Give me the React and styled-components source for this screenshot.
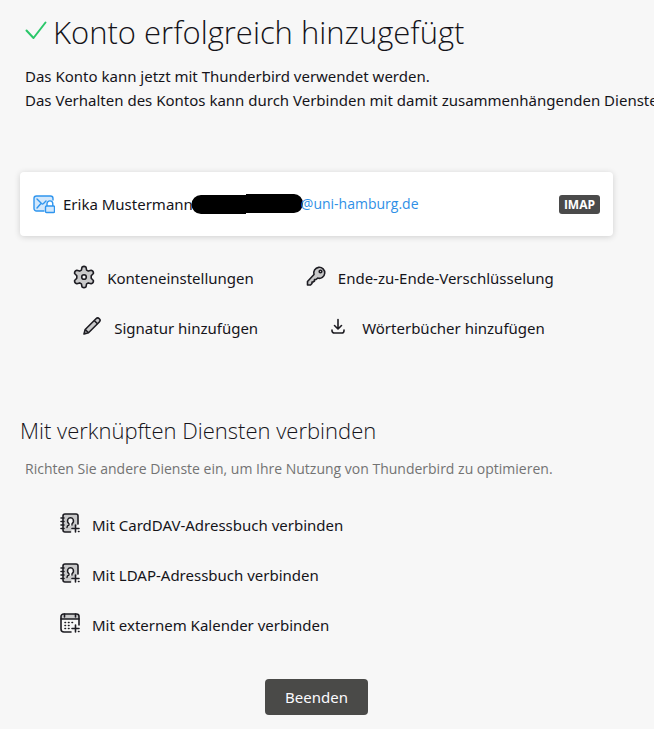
import React from "react";
import styled, { createGlobalStyle } from "styled-components";

const GlobalStyle = createGlobalStyle`
  * {
    box-sizing: border-box;
  }

  body {
    margin: 0;
    background: #f7f7f7;
    color: #15141a;
    font-family: "Noto Sans", "Open Sans", sans-serif;
    font-size: 15px;
    line-height: 24px;
  }
`;

const CheckIcon = () => (
  <svg width={22} height={24} viewBox="0 0 22 24" fill="none">
    <path
      d="M1.500 10.500L8.500 18L20.500 2.500"
      stroke="#2ac769"
      strokeWidth={2}
      strokeLinecap="round"
      strokeLinejoin="round"
    />
  </svg>
);

const MailLockIcon = () => (
  <svg
    width={22}
    height={20}
    viewBox="0 0 22 20"
    fill="#d3e8fc"
    stroke="#2f95ee"
    strokeWidth={1.4}
    strokeLinecap="round"
    strokeLinejoin="round"
  >
    <path d="M11 17H3.500a2.500 2.500 0 0 1-2.500-2.500v-10A2.500 2.500 0 0 1 3.500 2h14A2.500 2.500 0 0 1 20 4.500V6" />
    <path d="M4 5l4.500 4.500a1.500 1.500 0 0 0 2 0L13 7M4 14l3.500-4" fill="none" />
    <path d="M14 12.500V9.800a2.900 2.900 0 0 1 5.800 0v2.700" fill="#fff" />
    <rect x={12.5} y={12} width={9} height={6.5} rx={1} />
  </svg>
);

const GearIcon = () => (
  <svg
    width={22}
    height={26}
    viewBox="0 0 22 26"
    fill="#c9c9ca"
    stroke="#1d1c22"
    strokeWidth={1.6}
    strokeLinejoin="round"
  >
    <path d="M9 2.200q2-1.600 4 0l.6 2.900 1.700 1 2.900-.9q2.500.6 2.200 3.300l-2.200 2.200v2.600l2.200 2.200q.3 2.700-2.200 3.300l-2.900-.9-1.700 1-.6 2.900q-2 1.600-4 0l-.6-2.900-1.700-1-2.900.9q-2.500-.6-2.200-3.300l2.200-2.200v-2.600l-2.200-2.200q-.3-2.700 2.200-3.300l2.900.9 1.700-1z" />
    <circle cx={11} cy={12} r={2.3} fill="#f7f7f7" />
  </svg>
);

const KeyIcon = () => (
  <svg
    width={20}
    height={24}
    viewBox="0 0 20 24"
    fill="#c9c9ca"
    stroke="#1d1c22"
    strokeWidth={1.6}
    strokeLinejoin="round"
  >
    <path d="M8 8.500a5.500 5.500 0 1 1 3.700 3.600L10 13.500H8.500V15L7 16H6v1.500L4.500 19H1.500v-3.500z" />
    <circle cx={14.5} cy={5.5} r={1.3} fill="#f7f7f7" />
  </svg>
);

const PencilIcon = () => (
  <svg
    width={20}
    height={24}
    viewBox="0 0 20 24"
    fill="#c9c9ca"
    stroke="#1d1c22"
    strokeWidth={1.6}
    strokeLinejoin="round"
  >
    <path d="M2 18l1.200-4.500L14 2.700a2.300 2.300 0 0 1 3.300 3.300L6.500 16.800z" />
    <path d="M12.200 4.500l3.300 3.300M3.200 13.500l3.300 3.300" />
  </svg>
);

const DownloadIcon = () => (
  <svg
    width={16}
    height={22}
    viewBox="0 0 16 22"
    fill="none"
    stroke="#1d1c22"
    strokeWidth={1.6}
    strokeLinecap="round"
    strokeLinejoin="round"
  >
    <path d="M8 2.500v9M4.500 8.500L8 12 11.500 8.500" />
    <path d="M2 13v.7A2.300 2.300 0 0 0 4.300 16h7.400a2.300 2.300 0 0 0 2.300-2.300V13" />
  </svg>
);

const AddressBookIcon = () => (
  <svg
    width={20}
    height={26}
    viewBox="0 0 20 26"
    fill="none"
    stroke="#1d1c22"
    strokeWidth={1.6}
    strokeLinecap="round"
    strokeLinejoin="round"
  >
    <path
      d="M11 20H5a2 2 0 0 1-2-2V4a2 2 0 0 1 2-2h11a2 2 0 0 1 2 2v8.500L15 15l-3 2z"
      fill="#c9c9ca"
      stroke="none"
    />
    <path d="M10.500 20H5a2 2 0 0 1-2-2V4a2 2 0 0 1 2-2h11a2 2 0 0 1 2 2v8" />
    <path d="M1 6h3M1 9.500h3M1 13h3M1 16.500h3" />
    <path
      d="M7 15.500c0-1.500.5-2 2-2.500v-1.200c-1.600-1.300-1.700-3.200-1.100-4.500 1-2.100 4.200-2.100 5.200 0 .6 1.300.5 3.200-1.100 4.500V13"
      fill="#f7f7f7"
      strokeWidth={1.4}
    />
    <path d="M15.500 13v7M12 16.500h7M18.500 19.500h.5" />
  </svg>
);

const CalendarIcon = () => (
  <svg
    width={20}
    height={26}
    viewBox="0 0 20 26"
    fill="none"
    stroke="#1d1c22"
    strokeWidth={1.6}
    strokeLinecap="round"
    strokeLinejoin="round"
  >
    <path d="M1 7V4.500A2.500 2.500 0 0 1 3.500 2h13A2.500 2.500 0 0 1 19 4.500V7z" fill="#c9c9ca" />
    <path d="M11 20H4a3 3 0 0 1-3-3V7M19 7v6M4.500 2v3M15.500 2v3" />
    <path d="M5 10.500h.5M8.500 10.500H9M12 10.500h.5M5 13.500h.5M8.500 13.500H9M5 16.500h.5M8.500 16.500H9" />
    <path d="M15.500 13v7M12 16.500h7M18.500 19.500h.5" />
  </svg>
);

const Redaction = () => (
  <svg width={112} height={20} viewBox="0 0 112 20" aria-hidden="true">
    <path d="M10 1H55V0H103a8.500 9 0 0 1 0 19H55V20H10a9.500 9.500 0 0 1 0-19z" />
  </svg>
);

const App = () => {
  return (
    <Page>
      <GlobalStyle />
      <Header>
        <Title>
          <CheckIcon />
          Konto erfolgreich hinzugefügt
        </Title>
        <Intro>
          Das Konto kann jetzt mit Thunderbird verwendet werden.
          <br />
          Das Verhalten des Kontos kann durch Verbinden mit damit
          zusammenhängenden Diensten
        </Intro>
      </Header>

      <AccountCard>
        <MailLockIcon />
        <AccountName>Erika Mustermann</AccountName>
        <Redaction />
        <AccountMail>@uni-hamburg.de</AccountMail>
        <Protocol>IMAP</Protocol>
      </AccountCard>

      <Actions>
        <ActionRow $gap="52px">
          <ActionButton>
            <GearIcon />
            Konteneinstellungen
          </ActionButton>
          <ActionButton>
            <KeyIcon />
            Ende-zu-Ende-Verschlüsselung
          </ActionButton>
        </ActionRow>
        <ActionRow $gap="72px">
          <ActionButton>
            <PencilIcon />
            Signatur hinzufügen
          </ActionButton>
          <ActionButton $gap="16px">
            <DownloadIcon />
            Wörterbücher hinzufügen
          </ActionButton>
        </ActionRow>
      </Actions>

      <Subtitle>Mit verknüpften Diensten verbinden</Subtitle>
      <Hint>
        Richten Sie andere Dienste ein, um Ihre Nutzung von Thunderbird zu
        optimieren.
      </Hint>

      <Services>
        <ActionButton>
          <AddressBookIcon />
          Mit CardDAV-Adressbuch verbinden
        </ActionButton>
        <ActionButton>
          <AddressBookIcon />
          Mit LDAP-Adressbuch verbinden
        </ActionButton>
        <ActionButton>
          <CalendarIcon />
          Mit externem Kalender verbinden
        </ActionButton>
      </Services>

      <Footer>
        <FinishButton>Beenden</FinishButton>
      </Footer>
    </Page>
  );
};

const Page = styled.main`
  padding: 8px 41px 14px 20px;
  overflow-x: hidden;

  svg {
    flex: none;
  }
`;

const Header = styled.header`
  padding-left: 5px;
`;

const Title = styled.h1`
  display: flex;
  align-items: center;
  gap: 6px;
  margin: 0;
  font-family: "Open Sans", sans-serif;
  font-size: 31px;
  font-weight: 300;
  line-height: 48px;
  white-space: nowrap;
`;

const Intro = styled.p`
  margin: 8px 0 0;
  white-space: nowrap;
`;

const AccountCard = styled.section`
  display: flex;
  align-items: center;
  height: 64px;
  margin-top: 60px;
  padding: 0 13px;
  border-radius: 4px;
  background: #fff;
  box-shadow: 0 1px 6px rgba(0, 0, 0, 0.16);
`;

const AccountName = styled.span`
  margin: 0 -2px 0 8px;
  white-space: nowrap;
`;

const AccountMail = styled.span`
  margin-left: -2px;
  color: #2f8fe6;
  font-family: "Open Sans", sans-serif;
  font-size: 14px;
`;

const Protocol = styled.span`
  margin-left: auto;
  padding: 0 5px;
  border-radius: 3px;
  background: #4a4a4a;
  color: #fff;
  font-family: "Open Sans", sans-serif;
  font-size: 12px;
  font-weight: 700;
  line-height: 19px;
`;

const Actions = styled.div`
  display: grid;
  gap: 18px;
  margin-top: 26px;
  padding-right: 6px;
`;

const ActionRow = styled.div`
  display: flex;
  justify-content: center;
  gap: ${(props) => props.$gap};
`;

const ActionButton = styled.button`
  display: flex;
  align-items: center;
  gap: ${(props) => props.$gap || "12px"};
  height: 32px;
  padding: 0;
  border: none;
  background: none;
  color: inherit;
  font: inherit;
  white-space: nowrap;
  cursor: pointer;
`;

const Subtitle = styled.h2`
  margin: 70px 0 0;
  font-family: "Open Sans", sans-serif;
  font-size: 22px;
  font-weight: 300;
  line-height: 32px;
`;

const Hint = styled.p`
  margin: 11px 0 0 5px;
  color: #737373;
  font-family: "Open Sans", sans-serif;
  font-size: 14px;
`;

const Services = styled.div`
  display: grid;
  justify-items: start;
  gap: 18px;
  margin-top: 28px;
  padding-left: 40px;
`;

const Footer = styled.footer`
  display: flex;
  justify-content: center;
  margin-top: 38px;
`;

const FinishButton = styled.button`
  height: 36px;
  padding: 0 20px;
  border: none;
  border-radius: 4px;
  background: #4a4a48;
  color: #fbfbfe;
  font: inherit;
  cursor: pointer;
`;

export default App;
